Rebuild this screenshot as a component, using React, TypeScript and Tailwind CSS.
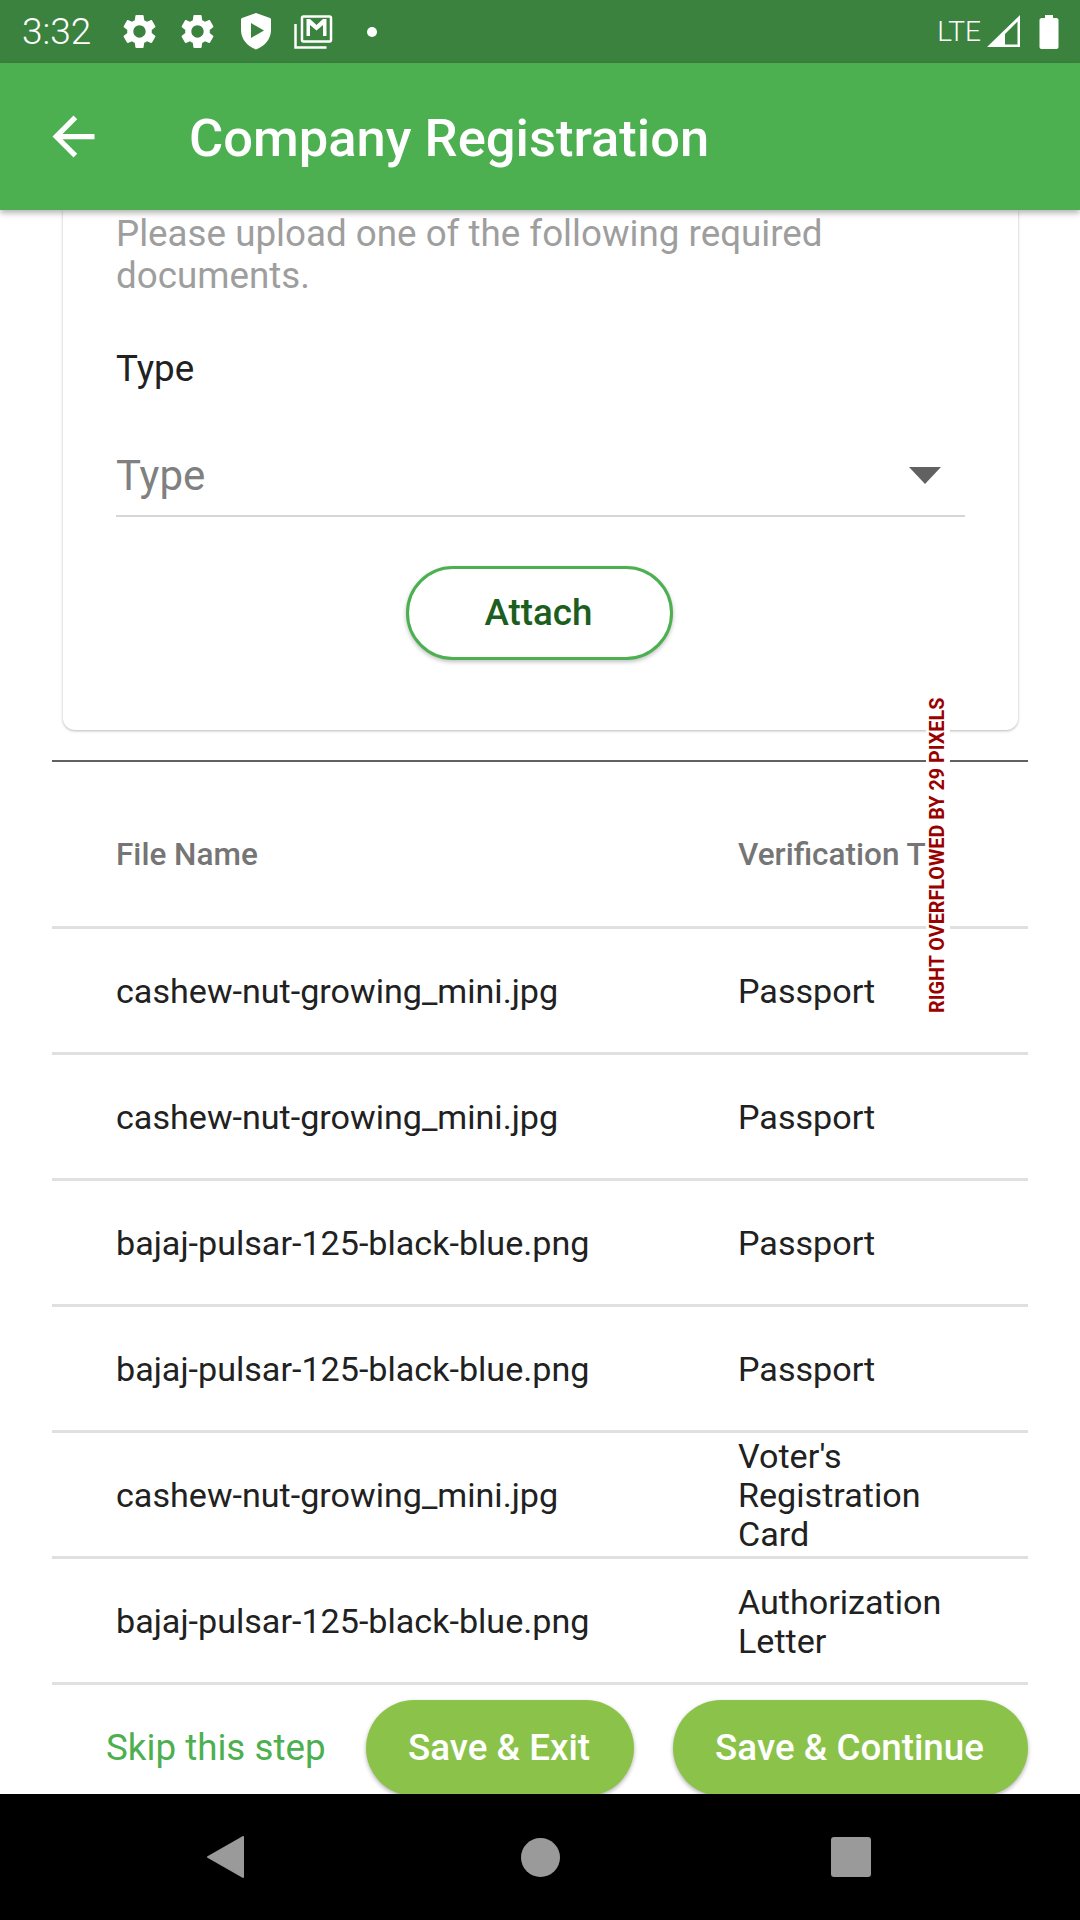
const files = [
  { name: "cashew-nut-growing_mini.jpg", type: ["Passport"] },
  { name: "cashew-nut-growing_mini.jpg", type: ["Passport"] },
  { name: "bajaj-pulsar-125-black-blue.png", type: ["Passport"] },
  { name: "bajaj-pulsar-125-black-blue.png", type: ["Passport"] },
  { name: "cashew-nut-growing_mini.jpg", type: ["Voter's", "Registration", "Card"] },
  { name: "bajaj-pulsar-125-black-blue.png", type: ["Authorization", "Letter"] },
];

function Gear() {
  return (
    <svg width="41" height="41" viewBox="0 0 24 24" fill="#fff">
      <path d="M19.14 12.94c.04-.3.06-.61.06-.94 0-.32-.02-.64-.07-.94l2.03-1.58c.18-.14.23-.41.12-.61l-1.92-3.32c-.12-.22-.37-.29-.59-.22l-2.39.96c-.5-.38-1.03-.7-1.62-.94l-.36-2.54c-.04-.24-.24-.41-.48-.41h-3.84c-.24 0-.43.17-.47.41l-.36 2.54c-.59.24-1.13.57-1.62.94l-2.39-.96c-.22-.08-.47 0-.59.22L2.74 8.87c-.12.21-.08.47.12.61l2.03 1.58c-.05.3-.09.63-.09.94s.02.64.07.94l-2.03 1.58c-.18.14-.23.41-.12.61l1.92 3.32c.12.22.37.29.59.22l2.39-.96c.5.38 1.03.7 1.62.94l.36 2.54c.05.24.24.41.48.41h3.84c.24 0 .44-.17.47-.41l.36-2.54c.59-.24 1.13-.56 1.62-.94l2.39.96c.22.08.47 0 .59-.22l1.92-3.32c.12-.22.07-.47-.12-.61l-2.01-1.58zM12 15.6c-1.98 0-3.6-1.62-3.6-3.6s1.62-3.6 3.6-3.6 3.6 1.62 3.6 3.6-1.62 3.6-3.6 3.6z" />
    </svg>
  );
}

function StatusBar() {
  return (
    <div className="flex h-[63px] shrink-0 items-center bg-[#3b823f] pl-[22px] pr-[21px] text-white">
      <span className="w-[97px] text-[37px] font-light">3:32</span>
      <Gear />
      <div className="ml-[17px]">
        <Gear />
      </div>
      <svg className="ml-[23px]" width="30" height="37" viewBox="0 0 30 37">
        <path fillRule="evenodd" fill="#fff" d="M15 0 L29 5 C30 5.500 30 6 30 7 L30 17 C30 26 24 33 15 36.500 C6 33 0 26 0 17 L0 7 C0 6 0 5.500 1 5 Z M10 10 L10 25 L23 17.500 Z" />
      </svg>
      <svg className="ml-[23px]" width="39" height="34" viewBox="0 0 38 34" fill="none">
        <path d="M1 9 L1 32.500 L32 32.500" stroke="#fff" strokeWidth="2.500" />
        <rect x="7.500" y="1.500" width="29" height="25" rx="1.500" stroke="#fff" strokeWidth="2.500" />
        <path d="M12 4 L12 21 L15.500 21 L15.500 10 L22 15.500 L28.500 10 L28.500 21 L32 21 L32 4 L28.500 4 L22 10 L15.500 4 Z" fill="#fff" />
      </svg>
      <span className="ml-[34px] h-[10px] w-[10px] rounded-full bg-white" />
      <span className="ml-auto text-[28px] font-light leading-none">LTE</span>
      <svg className="ml-[6px]" width="33" height="33" viewBox="0 0 33 33">
        <path fillRule="evenodd" fill="#fff" d="M33 0 L33 32 L0 32 Z M30.500 6.500 L18 19 L18 29.500 L30.500 29.500 Z" />
      </svg>
      <svg className="ml-[19px]" width="20" height="34" viewBox="0 0 19 34">
        <path fill="#fff" d="M5.500 0 H13.500 V3 H17 C18 3 19 4 19 5 V32 C19 33 18 34 17 34 H2 C1 34 0 33 0 32 V5 C0 4 1 3 2 3 H5.500 Z" />
      </svg>
    </div>
  );
}

function AppBar() {
  return (
    <div className="relative z-10 flex h-[147px] shrink-0 items-center bg-[#4caf50] pl-[42px] text-white shadow-[0_3px_6px_rgba(0,0,0,0.3)]">
      <svg width="63" height="63" viewBox="0 0 24 24" fill="#fff">
        <path d="M20 11H7.830l5.590-5.590L12 4l-8 8 8 8 1.410-1.410L7.830 13H20v-2z" />
      </svg>
      <span className="ml-[84px] pt-[3px] text-[52.500px] font-medium leading-none">Company Registration</span>
    </div>
  );
}

function UploadCard() {
  return (
    <div className="ml-[63px] mr-[62px] h-[520px] shrink-0 rounded-b-[12px] bg-white pl-[53px] pr-[53px] pt-[3px] shadow-[0_1px_3px_rgba(0,0,0,0.28)]">
      <p className="text-[36.750px] leading-[42px] text-[#9e9e9e]">
        Please upload one of the following required documents.
      </p>
      <p className="mt-[52px] text-[36.750px] leading-[40px] text-[#212121]">Type</p>
      <div className="mt-[62px] flex h-[66px] items-start justify-between border-b-2 border-[#d6d6d6] pr-[24px]">
        <span className="text-[42px] leading-[50px] text-[#808080]">Type</span>
        <svg className="mt-[16px]" width="32" height="17" viewBox="0 0 32 17">
          <path d="M0 0 H32 L16 17 Z" fill="#616161" />
        </svg>
      </div>
      <div className="mt-[49px] flex justify-center">
        <button className="h-[94px] w-[267px] -translate-x-px rounded-full border-[3px] border-[#4caf50] bg-white pr-[2px] text-[36.750px] font-medium text-[#1b5e20] shadow-[0_2px_4px_rgba(0,0,0,0.25)]">
          Attach
        </button>
      </div>
    </div>
  );
}

function FileTable() {
  return (
    <div className="mx-[52px] mt-[30px] flex shrink-0 flex-col border-t-2 border-[#616161]">
      <div className="flex h-[167px] items-center border-b-[3px] border-[#e0e0e0] pl-[64px] pt-[22px] text-[31.500px] font-medium text-[#757575]">
        <span className="w-[622px]">File Name</span>
        <span className="whitespace-nowrap">Verification T</span>
      </div>
      {files.map((f, i) => (
        <div key={i} className="flex h-[126px] items-center border-b-[3px] border-[#e0e0e0] pl-[64px] pt-[2px] text-[34.125px] text-[#212121]">
          <span className="w-[622px]">{f.name}</span>
          <span className="flex flex-col leading-[39px]">
            {f.type.map((t) => (
              <span key={t}>{t}</span>
            ))}
          </span>
        </div>
      ))}
    </div>
  );
}

function Footer() {
  return (
    <div className="flex items-start pl-[106px] pt-[15px]">
      <span className="mt-[27px] w-[218px] shrink-0 whitespace-nowrap text-[36.750px] leading-[42px] text-[#4caf50]">Skip this step</span>
      <button className="ml-[42px] h-[96px] w-[268px] shrink-0 rounded-full bg-[#8bc34a] pr-[2px] text-[36.750px] font-medium text-white shadow-[0_2px_4px_rgba(0,0,0,0.3)]">
        Save &amp; Exit
      </button>
      <button className="ml-[39px] h-[96px] w-[355px] shrink-0 rounded-full bg-[#8bc34a] pr-[2px] text-[36.750px] font-medium text-white shadow-[0_2px_4px_rgba(0,0,0,0.3)]">
        Save &amp; Continue
      </button>
    </div>
  );
}

function NavBar() {
  return (
    <div className="relative z-10 flex h-[126px] shrink-0 items-center bg-black pl-[207px]">
      <svg width="37" height="42" viewBox="0 0 37 42">
        <path d="M36 1 L36 41 L1 21 Z" fill="#9a9a9a" stroke="#9a9a9a" strokeLinejoin="round" strokeWidth="2" />
      </svg>
      <span className="ml-[277px] h-[39px] w-[39px] rounded-full bg-[#9a9a9a]" />
      <span className="ml-[271px] h-[40px] w-[40px] rounded-[3px] bg-[#9a9a9a]" />
    </div>
  );
}

export default function App() {
  return (
    <div className="relative flex h-[1920px] w-[1080px] flex-col overflow-hidden bg-white font-['Roboto',sans-serif]">
      <StatusBar />
      <AppBar />
      <div className="flex min-h-0 flex-1 flex-col overflow-hidden">
        <UploadCard />
        <FileTable />
        <Footer />
      </div>
      <NavBar />
      {/* Flutter overflow marker */}
      <div className="absolute left-[926px] top-[692px] flex h-[327px] w-[24px] rotate-180 items-center justify-center bg-white text-[19.800px] font-bold leading-[24px] text-[#990000] [writing-mode:vertical-rl]">
        RIGHT OVERFLOWED BY 29 PIXELS
      </div>
    </div>
  );
}
